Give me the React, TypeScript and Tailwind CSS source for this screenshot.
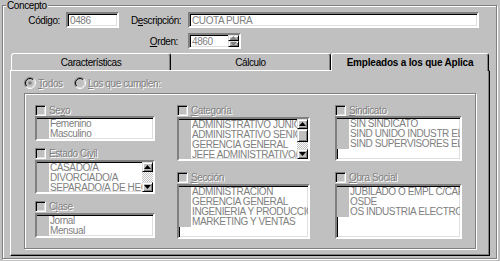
import React from "react";

const sunken =
  "border border-t-[#808080] border-l-[#808080] border-b-white border-r-white shadow-[inset_1px_1px_0_#000,inset_-1px_-1px_0_#dfdfdf]";
const sunken2 =
  "border-2 border-t-[#808080] border-l-[#808080] border-b-white border-r-white shadow-[inset_1px_1px_0_#000,inset_-1px_-1px_0_#dfdfdf]";
const raised =
  "border border-t-[#dfdfdf] border-l-[#dfdfdf] border-b-black border-r-black shadow-[inset_1px_1px_0_#fff,inset_-1px_-1px_0_#808080] bg-[#c0c0c0]";
const etched = "border border-[#808080] shadow-[1px_1px_0_#fff,inset_1px_1px_0_#fff]";
const dis = "text-[#808080] [text-shadow:1px_1px_0_#fff]";
const track =
  "bg-[repeating-conic-gradient(#ffffff_0%_25%,#c0c0c0_0%_50%)] [background-size:2px_2px]";

function Arrow({ down = false, color = "#000" }: { down?: boolean; color?: string }) {
  return (
    <svg width="7" height="4" viewBox="0 0 7 4">
      {down ? (
        <polygon points="0,0 7,0 3.5,4" fill={color} />
      ) : (
        <polygon points="0,4 7,4 3.5,0" fill={color} />
      )}
    </svg>
  );
}

function Radio({ checked }: { checked?: boolean }) {
  return (
    <svg width="12" height="12" viewBox="0 0 12 12" className="shrink-0">
      <circle cx="6" cy="6" r="5" fill="#c0c0c0" />
      <path d="M2.1 9.9 A5.5 5.5 0 0 1 9.9 2.1" stroke="#808080" fill="none" />
      <path d="M9.9 2.1 A5.5 5.5 0 0 1 2.1 9.9" stroke="#ffffff" fill="none" />
      <path d="M2.8 9.2 A4.5 4.5 0 0 1 9.2 2.8" stroke="#000000" fill="none" />
      <path d="M9.2 2.8 A4.5 4.5 0 0 1 2.8 9.2" stroke="#dfdfdf" fill="none" />
      {checked && <circle cx="6" cy="6" r="1.8" fill="#808080" />}
    </svg>
  );
}

function Header({ children }: { children: React.ReactNode }) {
  return (
    <div className="flex items-center h-[11px] gap-[3px]">
      <div className={`w-[11px] h-[11px] shrink-0 bg-[#c0c0c0] ${sunken}`} />
      <span className={`leading-[11px] whitespace-nowrap ${dis}`}>{children}</span>
    </div>
  );
}

function Items({ items }: { items: string[] }) {
  return (
    <div className="flex-1 min-w-0 overflow-hidden pt-px">
      {items.map((t) => (
        <div key={t} className="flex h-[10px]">
          <div className="w-[12px] shrink-0 bg-[#c0c0c0]" />
          <span className="pl-px leading-[10px] whitespace-nowrap text-[#808080]">{t}</span>
        </div>
      ))}
    </div>
  );
}

function ListBox({
  items,
  cls,
  scroll,
}: {
  items: string[];
  cls: string;
  scroll?: "plain" | "thumb";
}) {
  return (
    <div className={`bg-white flex overflow-hidden ${sunken2} ${cls}`}>
      <Items items={items} />
      {scroll === "plain" && (
        <div className="w-[11px] shrink-0 flex flex-col">
          <div className={`h-[10px] flex items-center justify-center ${raised}`}>
            <Arrow />
          </div>
          <div className={`flex-1 ${track}`} />
          <div className={`h-[10px] flex items-center justify-center ${raised}`}>
            <Arrow down />
          </div>
        </div>
      )}
      {scroll === "thumb" && (
        <div className="w-[11px] shrink-0 flex flex-col">
          <div className={`h-[10px] flex items-center justify-center ${raised}`}>
            <Arrow />
          </div>
          <div className={`h-[13px] ${raised}`} />
          <div className={`flex-1 ${track}`} />
          <div className={`h-[10px] flex items-center justify-center ${raised}`}>
            <Arrow down />
          </div>
        </div>
      )}
    </div>
  );
}

function Field({ cls, children }: { cls: string; children?: React.ReactNode }) {
  return (
    <div className={`h-[16px] bg-white flex items-center pl-[2px] text-[#808080] ${sunken2} ${cls}`}>
      {children}
    </div>
  );
}

export default function App() {
  return (
    <div className="w-[500px] h-[261px] bg-[#c0c0c0] overflow-hidden text-[10px] tracking-[-0.4px] text-black font-['Liberation_Sans',Arial,sans-serif]">
      <div className="pt-[5px] pl-[2px]">
        <div className={`relative w-[495px] h-[254px] ${etched}`}>
          <span className="absolute left-[3px] -top-[6px] px-px bg-[#c0c0c0] leading-[11px]">
            Concepto
          </span>

          {/* Row 1 */}
          <div className="mt-[6px] flex items-center h-[16px]">
            <div className="w-[57px] text-right">Código:</div>
            <Field cls="ml-[6px] w-[53px]">0486</Field>
            <div className="ml-[12px] w-[57px]">
              D<span className="underline">e</span>scripción:
            </div>
            <Field cls="w-[291px]">CUOTA PURA</Field>
          </div>

          {/* Row 2 */}
          <div className="mt-[5px] flex items-center h-[16px]">
            <div className="w-[175px] text-right">
              <span className="underline">O</span>rden:
            </div>
            <div className={`ml-[10px] w-[53px] h-[16px] bg-white flex ${sunken2}`}>
              <div className="flex-1 flex items-center pl-[2px] text-[#808080]">4860</div>
              <div className="w-[11px] flex flex-col">
                <div className={`flex-1 flex items-center justify-center ${raised}`}>
                  <Arrow color="#808080" />
                </div>
                <div className={`flex-1 flex items-center justify-center ${raised}`}>
                  <Arrow down color="#808080" />
                </div>
              </div>
            </div>
          </div>

          {/* Tabs */}
          <div className="mt-[4px] ml-[7px] w-[480px]">
            <div className="flex pl-px h-[17px] items-end">
              <div className="w-[160px] h-[17px] flex items-center justify-center border-l border-t border-white border-r border-r-black rounded-tl-[3px] rounded-tr-[3px] shadow-[inset_-1px_0_0_#808080]">
                Características
              </div>
              <div className="w-[160px] h-[17px] flex items-center justify-center border-t border-white border-r border-r-black rounded-tr-[3px] shadow-[inset_-1px_0_0_#808080]">
                Cálculo
              </div>
              <div className="relative z-10 w-[158px] h-[18px] -mb-px bg-[#c0c0c0] flex items-center justify-center font-bold tracking-[-0.2px] border-l border-t border-white border-r border-r-black rounded-tl-[3px] rounded-tr-[3px] shadow-[inset_-1px_0_0_#808080]">
                Empleados a los que Aplica
              </div>
            </div>

            {/* Panel */}
            <div className="h-[186px] border-l border-t border-white border-r border-b border-r-black border-b-black shadow-[inset_-1px_-1px_0_#808080]">
              <div className="mt-[6px] ml-[13px] flex items-center h-[12px]">
                <div className="w-[50px] flex items-center gap-[2px]">
                  <Radio checked />
                  <span className={dis}>
                    <span className="underline">T</span>odos
                  </span>
                </div>
                <div className="flex items-center gap-[2px]">
                  <Radio />
                  <span className={dis}>
                    <span className="underline">L</span>os que cumplen:
                  </span>
                </div>
              </div>

              <div className={`mt-[4px] ml-[13px] w-[452px] h-[156px] ${etched}`}>
                <div className="flex pl-[10px] pt-[11px]">
                  {/* Col 1 */}
                  <div className="w-[120px] flex flex-col">
                    <Header>
                      Se<span className="underline">x</span>o
                    </Header>
                    <ListBox items={["Femenino", "Masculino"]} cls="h-[25px]" />
                    <div className="mt-[7px]">
                      <Header>
                        Estado Ci<span className="underline">v</span>il
                      </Header>
                    </div>
                    <ListBox
                      items={["CASADO/A", "DIVORCIADO/A", "SEPARADO/A DE HECHO"]}
                      cls="mt-px h-[34px]"
                      scroll="plain"
                    />
                    <div className="mt-[7px]">
                      <Header>
                        C<span className="underline">l</span>ase
                      </Header>
                    </div>
                    <ListBox items={["Jornal", "Mensual"]} cls="mt-px h-[25px]" />
                  </div>

                  {/* Col 2 */}
                  <div className="ml-[22px] w-[133px] flex flex-col">
                    <Header>
                      <span className="underline">C</span>ategoría
                    </Header>
                    <ListBox
                      items={[
                        "ADMINISTRATIVO JUNIOR",
                        "ADMINISTRATIVO SENIOR",
                        "GERENCIA GENERAL",
                        "JEFE ADMINISTRATIVO/CONTABLE",
                      ]}
                      cls="mt-px h-[44px]"
                      scroll="thumb"
                    />
                    <div className="mt-[11px]">
                      <Header>
                        <span className="underline">S</span>ección
                      </Header>
                    </div>
                    <ListBox
                      items={[
                        "ADMINISTRACION",
                        "GERENCIA GENERAL",
                        "INGENIERIA Y PRODUCCION",
                        "MARKETING Y VENTAS",
                      ]}
                      cls="mt-px h-[55px]"
                    />
                  </div>

                  {/* Col 3 */}
                  <div className="ml-[25px] w-[127px] flex flex-col">
                    <Header>
                      <span className="underline">S</span>indicato
                    </Header>
                    <ListBox
                      items={[
                        "SIN SINDICATO",
                        "SIND UNIDO INDUSTR ELECTRICA",
                        "SIND SUPERVISORES ELECTRICOS",
                      ]}
                      cls="h-[45px]"
                    />
                    <div className="mt-[11px]">
                      <Header>
                        <span className="underline">O</span>bra Social
                      </Header>
                    </div>
                    <ListBox
                      items={[
                        "JUBILADO O EMPL C/CAP DIFERENCIADA",
                        "OSDE",
                        "OS INDUSTRIA ELECTRONICA",
                      ]}
                      cls="mt-px h-[55px]"
                    />
                  </div>
                </div>
              </div>
            </div>
          </div>
        </div>
      </div>
    </div>
  );
}
